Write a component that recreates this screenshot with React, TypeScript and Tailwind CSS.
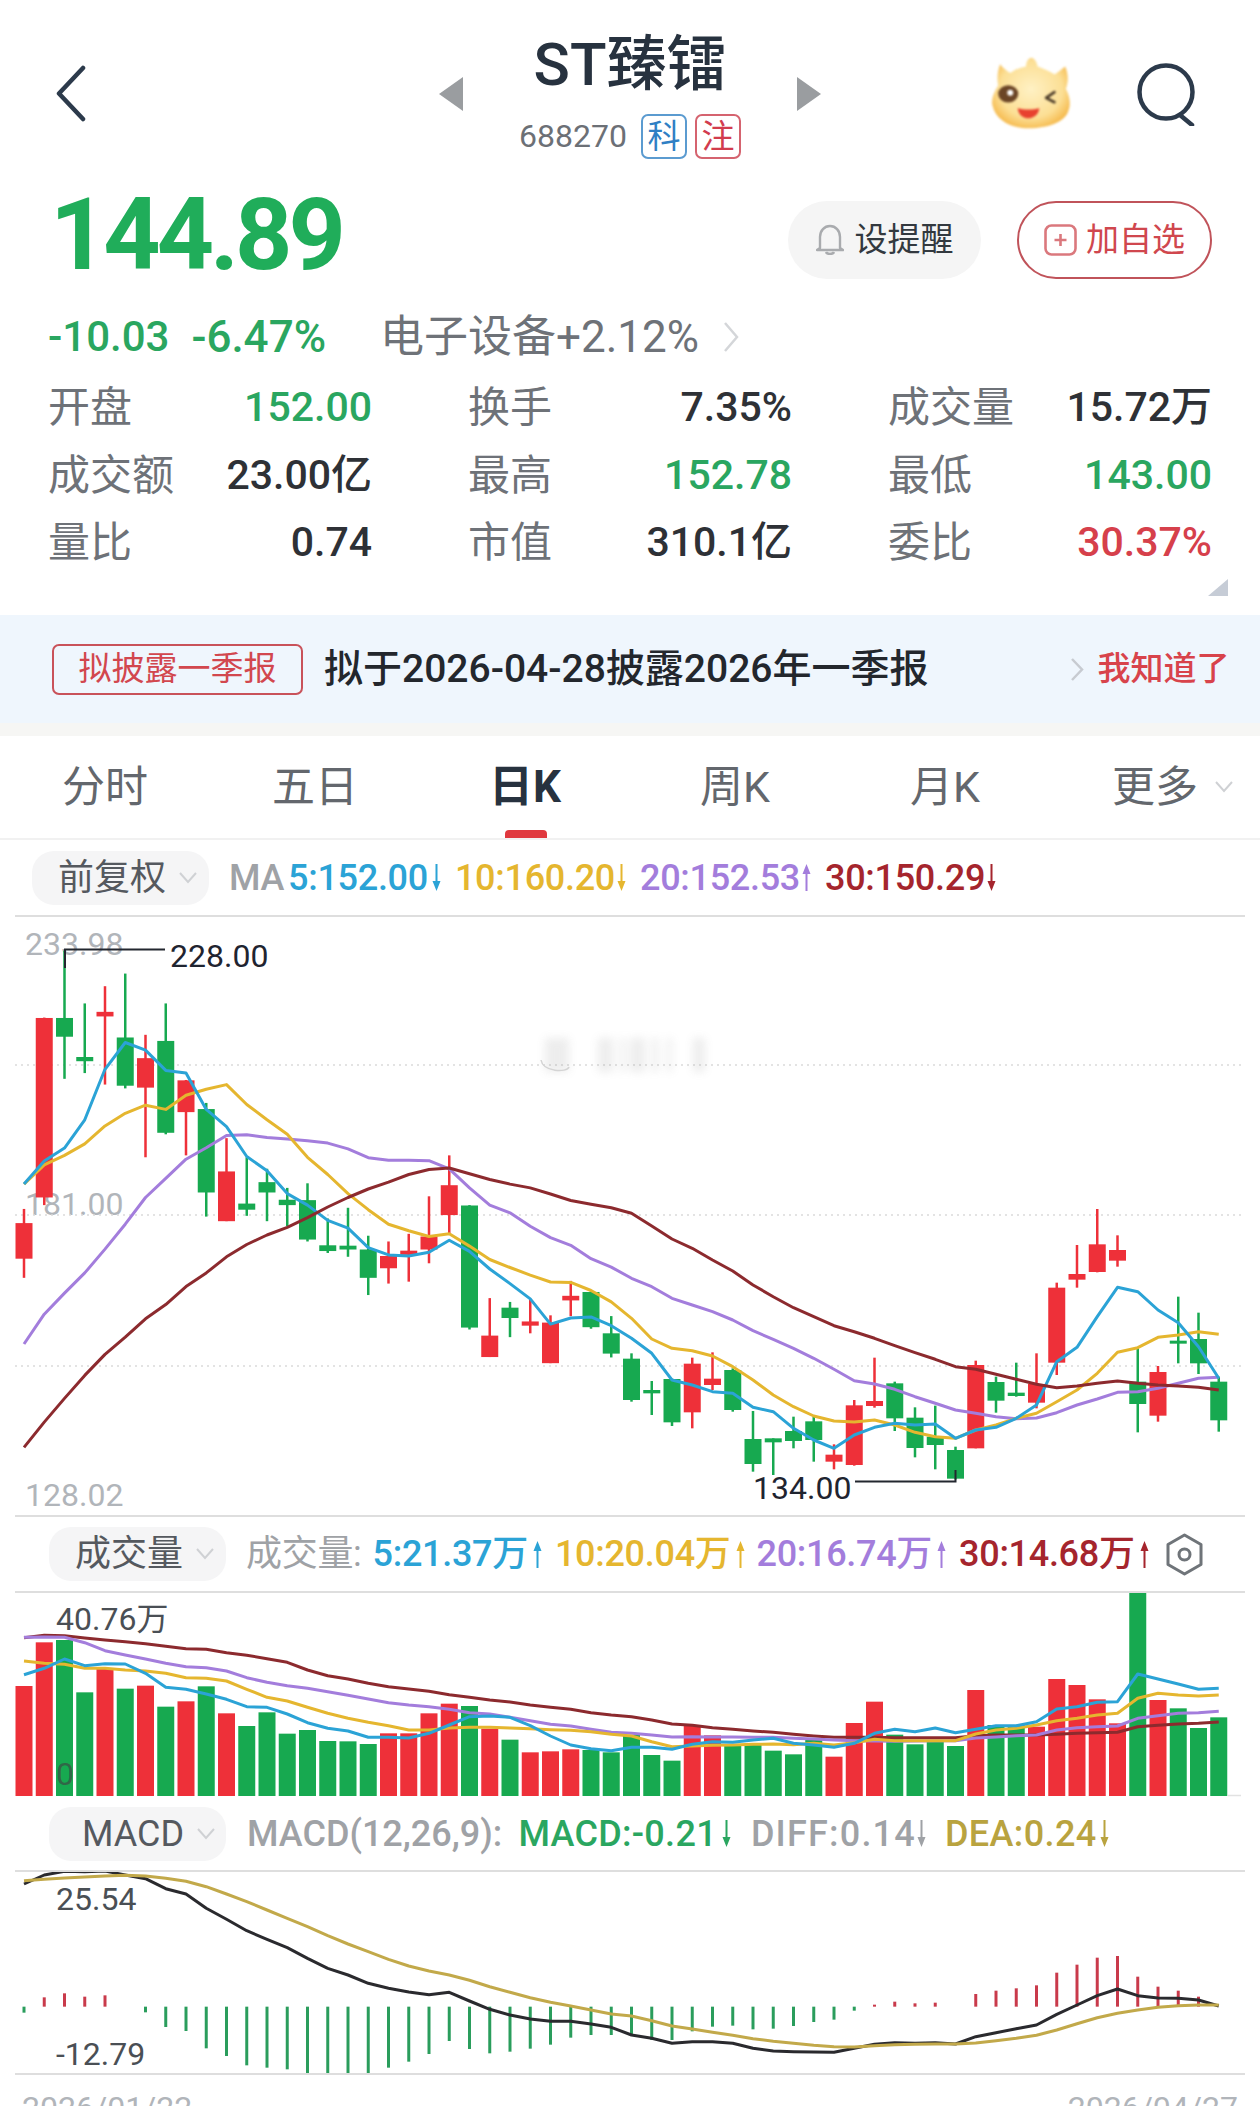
import React from 'react';

const RED = '#ee3039';
const GREEN = '#17a950';

const X = (i: number) => 24 + 20.25 * i;
// chart values below were read off crops, so each block has its own scale
const fromA = (v: number) => 920 + v / 2.613;
const fromB = (v: number) => 1100 + v / 3;
const fromVol = (v: number) => 1500 + v / 3;
const fromMacd = (v: number) => 1790 + v / 3;

type Candle = [number, number, number, number, 'r' | 'g'];

const candlesA: Candle[] = [
  [755, 792, 885, 935, 'r'], [255, 256, 725, 745, 'r'], [80, 256, 305, 415, 'g'], [218, 358, 369, 400, 'g'],
  [173, 240, 252, 430, 'r'], [140, 307, 433, 440, 'g'], [300, 361, 438, 620, 'r'], [218, 316, 556, 560, 'g'],
  [418, 419, 502, 615, 'r'], [478, 494, 712, 775, 'g'], [570, 657, 787, 787, 'r'], [620, 741, 757, 773, 'g'],
  [650, 685, 712, 787, 'g'], [700, 731, 745, 800, 'g'], [688, 732, 835, 840, 'g'], [780, 850, 865, 870, 'g'],
  [752, 851, 861, 880, 'g'], [825, 861, 935, 980, 'g'], [840, 878, 910, 950, 'r'], [820, 864, 875, 945, 'r'],
  [722, 827, 861, 897, 'r'], [615, 693, 771, 820, 'r'], [745, 746, 1065, 1070, 'g'], [988, 1086, 1142, 1142, 'r'],
  [998, 1013, 1040, 1090, 'g'], [990, 1049, 1060, 1080, 'r'], [1033, 1052, 1158, 1158, 'r'], [943, 982, 994, 1035, 'r'],
  [970, 972, 1064, 1068, 'g'], [1035, 1080, 1133, 1143, 'g'],
];
const candlesB: Candle[] = [
  [760, 776, 900, 905, 'g'], [843, 870, 880, 945, 'g'], [836, 837, 967, 978, 'g'], [773, 791, 937, 985, 'r'],
  [757, 836, 855, 870, 'r'], [805, 810, 930, 935, 'g'], [933, 1017, 1092, 1115, 'g'], [1015, 1015, 1027, 1125, 'g'],
  [950, 993, 1023, 1045, 'g'], [950, 964, 1020, 1085, 'g'], [1033, 1064, 1085, 1108, 'r'], [900, 916, 1095, 1097, 'r'],
  [773, 903, 918, 923, 'r'], [845, 850, 955, 993, 'g'], [922, 953, 1044, 1072, 'g'], [917, 1010, 1035, 1108, 'g'],
  [1040, 1050, 1136, 1138, 'g'], [782, 795, 1045, 1045, 'r'], [830, 846, 902, 938, 'g'], [788, 878, 888, 890, 'g'],
  [760, 852, 908, 925, 'r'], [548, 563, 788, 825, 'r'], [435, 522, 539, 563, 'r'], [327, 433, 516, 517, 'r'],
  [406, 450, 482, 500, 'r'], [745, 845, 912, 997, 'g'], [798, 816, 947, 965, 'r'], [590, 722, 731, 790, 'g'],
  [638, 717, 790, 822, 'g'], [830, 845, 961, 995, 'g'],
];
const candles = [
  ...candlesA.map(c => [fromA(c[0]), fromA(c[1]), fromA(c[2]), fromA(c[3]), c[4]] as Candle),
  ...candlesB.map(c => [fromB(c[0]), fromB(c[1]), fromB(c[2]), fromB(c[3]), c[4]] as Candle),
];

const join = (a: number[], b: number[], fa: (v: number) => number, fb: (v: number) => number) =>
  [...a.map(fa), ...b.map(fb)].map((y, i) => `${X(i)},${y.toFixed(1)}`).join(' ');

const priceLines = [
  {
    color: '#a37ddc',
    d: join(
      [1108, 1030, 975, 922, 860, 795, 725, 675, 625, 595, 563, 561, 568, 572, 577, 583, 598, 621, 628, 628, 629, 650, 700, 745, 765, 800, 830, 850, 885, 907],
      [535, 560, 595, 615, 635, 660, 692, 718, 745, 775, 808, 842, 852, 868, 890, 910, 930, 940, 950, 956, 954, 938, 915, 897, 877, 875, 865, 850, 835, 832],
      fromA, fromB,
    ),
  },
  {
    color: '#e5b62f',
    d: join(
      [690, 640, 615, 585, 538, 505, 484, 495, 458, 442, 430, 482, 522, 560, 620, 665, 715, 757, 795, 812, 827, 820, 852, 887, 908, 928, 946, 947, 968, 998],
      [655, 717, 745, 752, 768, 800, 840, 885, 920, 948, 963, 966, 960, 975, 997, 1010, 1015, 990, 975, 955, 940, 905, 870, 820, 757, 743, 712, 705, 695, 703],
      fromA, fromB,
    ),
  },
  {
    color: '#2ba3d6',
    d: join(
      [690, 630, 596, 522, 390, 320, 340, 393, 400, 495, 540, 618, 655, 715, 745, 785, 805, 856, 875, 878, 868, 837, 866, 912, 950, 990, 1056, 1040, 1037, 1060],
      [715, 760, 840, 855, 875, 880, 922, 935, 985, 1020, 1045, 1005, 982, 970, 975, 972, 1015, 990, 982, 955, 915, 785, 742, 650, 562, 575, 630, 668, 740, 835],
      fromA, fromB,
    ),
  },
  {
    color: '#8c2a2e',
    d: join(
      [1378, 1312, 1250, 1190, 1135, 1090, 1042, 1005, 958, 922, 880, 848, 823, 803, 778, 750, 725, 703, 685, 665, 652, 648, 663, 678, 690, 700, 716, 733, 743, 752],
      [340, 378, 417, 445, 480, 513, 555, 590, 623, 650, 677, 695, 715, 737, 758, 778, 800, 808, 823, 838, 853, 863, 858, 850, 843, 850, 855, 858, 862, 870],
      fromA, fromB,
    ),
  },
];

const volBars: [number, 'r' | 'g'][] = [
  [558, 'r'], [427, 'r'], [420, 'g'], [577, 'g'], [505, 'r'], [566, 'g'], [557, 'r'], [620, 'g'], [604, 'r'], [559, 'g'],
  [640, 'r'], [678, 'g'], [637, 'g'], [701, 'g'], [690, 'g'], [723, 'g'], [724, 'g'], [732, 'g'], [700, 'r'], [700, 'r'],
  [640, 'r'], [611, 'r'], [618, 'g'], [686, 'r'], [719, 'g'], [757, 'r'], [754, 'r'], [748, 'r'], [750, 'g'], [757, 'g'],
  [705, 'g'], [765, 'g'], [782, 'g'], [678, 'r'], [706, 'r'], [735, 'g'], [730, 'g'], [752, 'g'], [763, 'g'], [720, 'g'],
  [770, 'r'], [669, 'r'], [605, 'r'], [704, 'g'], [733, 'g'], [725, 'g'], [738, 'g'], [570, 'r'], [675, 'g'], [675, 'g'],
  [680, 'r'], [537, 'r'], [555, 'r'], [598, 'r'], [670, 'r'], [278, 'g'], [600, 'r'], [625, 'g'], [684, 'g'], [652, 'g'],
];

const volLines = [
  {
    color: '#8c2a2e',
    d: join(
      [413, 406, 407, 414, 420, 425, 431, 439, 446, 448, 458, 466, 476, 487, 510, 527, 537, 550, 560, 567, 574, 584, 592, 600, 606, 615, 622, 628, 638, 645],
      [650, 660, 672, 676, 683, 688, 693, 697, 703, 708, 712, 712, 712, 713, 713, 713, 713, 707, 705, 705, 705, 703, 700, 698, 697, 680, 676, 672, 670, 666],
      fromVol, fromVol,
    ),
  },
  {
    color: '#a37ddc',
    d: join(
      [412, 411, 412, 428, 452, 465, 477, 490, 500, 503, 513, 533, 547, 557, 565, 575, 586, 597, 608, 615, 620, 628, 638, 642, 652, 662, 673, 678, 688, 697],
      [700, 705, 711, 710, 711, 711, 712, 712, 715, 717, 720, 722, 723, 724, 723, 722, 722, 714, 711, 707, 705, 690, 683, 680, 678, 655, 647, 640, 638, 634],
      fromVol, fromVol,
    ),
  },
  {
    color: '#e5b62f',
    d: join(
      [483, 490, 493, 505, 505, 510, 513, 520, 533, 535, 543, 568, 592, 603, 622, 640, 655, 667, 677, 690, 690, 684, 682, 682, 684, 686, 689, 691, 695, 703],
      [708, 725, 740, 738, 736, 735, 733, 732, 734, 730, 735, 728, 718, 722, 722, 722, 722, 702, 690, 685, 675, 662, 655, 645, 640, 595, 580, 585, 588, 585],
      fromVol, fromVol,
    ),
  },
  {
    color: '#2ba3d6',
    d: join(
      [524, 505, 477, 497, 491, 492, 520, 562, 568, 582, 598, 620, 622, 642, 668, 685, 693, 712, 712, 714, 700, 675, 650, 648, 652, 677, 708, 735, 746, 752],
      [742, 742, 748, 733, 725, 727, 720, 715, 730, 735, 742, 730, 700, 688, 695, 684, 698, 688, 677, 677, 665, 627, 620, 607, 605, 522, 537, 552, 568, 565],
      fromVol, fromVol,
    ),
  },
];

const macdHist = [
  668, 622, 610, 620, 616, 650, 667, 711, 723, 775, 798, 826, 833, 838, 850, 850, 850, 850, 833, 815,
  792, 753, 777, 790, 785, 776, 764, 743, 735, 735, 733, 750, 750, 724, 710, 707, 718, 716, 708, 696,
  689, 662, 644, 635, 640, 638, 650, 612, 602, 595, 586, 548, 524, 503, 498, 560, 590, 602, 620, 650,
];

const diffLine = join(
  [282, 255, 244, 245, 243, 255, 266, 296, 312, 355, 388, 422, 448, 473, 505, 535, 555, 580, 595, 606, 614, 607, 633, 658, 675, 687, 694, 694, 702, 712],
  [735, 745, 760, 755, 755, 760, 775, 783, 785, 786, 787, 775, 763, 758, 760, 758, 762, 740, 728, 716, 705, 673, 645, 617, 597, 617, 624, 625, 630, 648],
  fromMacd, fromMacd,
);
const deaLine = join(
  [272, 268, 264, 261, 258, 256, 258, 265, 274, 290, 312, 335, 360, 385, 410, 437, 462, 485, 508, 528, 543, 555, 571, 590, 607, 623, 637, 648, 660, 672],
  [678, 692, 708, 717, 727, 736, 746, 754, 760, 766, 770, 771, 767, 764, 763, 762, 762, 759, 752, 745, 736, 720, 701, 683, 670, 660, 652, 647, 645, 645],
  fromMacd, fromMacd,
);

const Arrow = ({ up, className }: { up?: boolean; className: string }) => (
  <svg width="9" height="27" viewBox="0 0 9 27" className={className} fill="currentColor">
    {up ? <path d="M4.5 0L8.5 10H5.5V27H3.5V10H.5z" /> : <path d="M4.5 27L.5 17H3.5V0H5.5V17H8.5z" />}
  </svg>
);

const Chevron = ({ className }: { className?: string }) => (
  <svg width="20" height="14" viewBox="0 0 20 14" fill="none" stroke="#cfd1d4" strokeWidth="2" className={className}>
    <path d="M2 2l8 9 8-9" />
  </svg>
);

const Pill = ({ label, className }: { label: string; className: string }) => (
  <div className={`flex items-center h-[54px] w-[177px] rounded-[22px] bg-[#f5f5f6] text-[36px] font-normal tracking-normal text-[#55595f] ${className}`}>
    {label}
    <Chevron className="ml-[12px]" />
  </div>
);

const Rule = () => <div className="mx-[15px] h-[2px] bg-[#dedede]" />;

const Mascot = () => (
  <svg width="82" height="72" viewBox="0 0 240 215" className="blur-[1px]">
    <defs>
      <radialGradient id="head" cx="50%" cy="45%" r="62%">
        <stop offset="0%" stopColor="#fff1c4" />
        <stop offset="65%" stopColor="#fcdf95" />
        <stop offset="100%" stopColor="#f4b13c" />
      </radialGradient>
    </defs>
    <path
      d="M5 145C0 125 10 105 22 85C18 65 20 40 28 22C35 32 45 40 58 48C70 38 90 30 105 28C105 15 112 2 122 2C132 4 138 18 140 28C160 35 180 45 190 52C200 45 210 38 222 28C232 50 232 75 224 95C235 115 240 140 232 160C222 195 170 213 115 213C60 213 15 190 5 145Z"
      fill="url(#head)"
    />
    <ellipse cx="52" cy="110" rx="30" ry="26" fill="#6b4526" />
    <circle cx="58" cy="107" r="9" fill="#fff" />
    <path d="M190 105L165 122L190 135" fill="none" stroke="#4a3a28" strokeWidth="8" strokeLinecap="round" strokeLinejoin="round" />
    <path d="M80 153C100 158 125 158 145 153C142 175 125 183 112 183C98 183 83 175 80 153Z" fill="#e8402f" />
  </svg>
);

const Search = () => (
  <svg width="58" height="63" viewBox="0 0 58 63" fill="none" stroke="#2c3a4b" strokeWidth="4.5" strokeLinecap="round">
    <circle cx="29" cy="29" r="26.5" />
    <path d="M43 52l12 10" />
  </svg>
);

const Bell = () => (
  <svg width="28" height="32" viewBox="0 0 28 32" fill="none" stroke="#a9abae" strokeWidth="2.4">
    <path d="M4 24V13C4 6.5 8.500 2 14 2s10 4.500 10 11v11l3 2H1z" strokeLinejoin="round" />
    <path d="M10 28c1 2.500 7 2.500 8 0" />
  </svg>
);

const PlusBox = () => (
  <svg width="33" height="32" viewBox="0 0 33 32" fill="none" stroke="#d2575d" strokeWidth="2.6" className="opacity-80">
    <rect x="1.500" y="1.500" width="30" height="29" rx="6" />
    <path d="M16.500 10v12M10.500 16h12" />
  </svg>
);

const Hexagon = () => (
  <svg width="37" height="43" viewBox="0 0 37 43" fill="none" stroke="#6f7479" strokeWidth="3">
    <path d="M18.500 2L35 11.500v20L18.500 41 2 31.500v-20z" strokeLinejoin="round" />
    <circle cx="18.500" cy="21.500" r="5.500" />
  </svg>
);

const stats = [
  ['开盘', '152.00', 'text-[#2aa660]'], ['换手', '7.35%', 'text-[#2e3136]'], ['成交量', '15.72万', 'text-[#2e3136]'],
  ['成交额', '23.00亿', 'text-[#2e3136]'], ['最高', '152.78', 'text-[#2aa660]'], ['最低', '143.00', 'text-[#2aa660]'],
  ['量比', '0.74', 'text-[#2e3136]'], ['市值', '310.1亿', 'text-[#2e3136]'], ['委比', '30.37%', 'text-[#d6404b]'],
];

const tabs = ['分时', '五日', '日K', '周K', '月K', '更多'];

export default function App() {
  return (
    <div className="relative h-[2106px] w-[1260px] overflow-hidden bg-white font-['Roboto','Noto_Sans_CJK_SC',sans-serif]">
      {/* header */}
      <div className="flex h-[190px] items-start">
        <svg width="31" height="57" viewBox="0 0 31 57" fill="none" stroke="#2c3a4b" strokeWidth="4.5" strokeLinecap="round" strokeLinejoin="round" className="ml-[55px] mt-[65px]">
          <path d="M28 3L4 28.500 28 54" />
        </svg>
        <svg width="24" height="34" viewBox="0 0 24 34" className="ml-[353px] mt-[77px]">
          <path d="M24 0L0 17l24 17z" fill="#9a9da0" />
        </svg>
        <div className="flex w-[334px] flex-col items-center pt-[30px]">
          <div className="text-[60px] font-medium leading-[70px] text-[#27323f]">ST臻镭</div>
          <div className="mt-[14px] flex items-center">
            <span className="text-[32px] leading-[45px] text-[#6c7076]">688270</span>
            <span className="ml-[14px] flex h-[45px] w-[46px] items-center justify-center rounded-[7px] border-2 border-[#5b9bd0] text-[33px] text-[#2f7fc4]">科</span>
            <span className="ml-[8px] flex h-[45px] w-[46px] items-center justify-center rounded-[7px] border-2 border-[#d5636f] text-[33px] text-[#d23c4e]">注</span>
          </div>
        </div>
        <svg width="24" height="34" viewBox="0 0 24 34" className="mt-[77px]">
          <path d="M0 0l24 17L0 34z" fill="#9a9da0" />
        </svg>
        <div className="ml-[169px] mt-[57px]"><Mascot /></div>
        <div className="ml-[65px] mt-[63px]"><Search /></div>
      </div>

      {/* price */}
      <div className="flex h-[110px] items-start justify-between pl-[50px] pr-[48px]">
        <div className="-mt-[5px] text-[100px] font-bold leading-[100px] tracking-[-4px] text-[#20ad5a]">144.89</div>
        <div className="mt-[11px] flex gap-[36px]">
          <div className="flex h-[78px] w-[193px] items-center justify-center gap-[11px] rounded-full bg-[#f5f5f5] text-[33px] text-[#33393f]">
            <Bell />
            设提醒
          </div>
          <div className="flex h-[78px] w-[195px] items-center justify-center gap-[9px] rounded-full border-2 border-[#c0535a] text-[33px] text-[#d0474e]">
            <PlusBox />
            加自选
          </div>
        </div>
      </div>

      {/* change */}
      <div className="flex h-[74px] items-center pl-[48px] leading-none">
        <span className="text-[42px] font-medium text-[#2aa660]">-10.03</span>
        <span className="ml-[22px] text-[44px] font-medium text-[#2aa660]">-6.47%</span>
        <span className="ml-[54px] text-[44px] text-[#6e7278]">电子设备+2.12%</span>
        <svg width="16" height="32" viewBox="0 0 16 32" fill="none" stroke="#d4d6d9" strokeWidth="2.500" className="ml-[24px]">
          <path d="M2 2l12 14L2 30" />
        </svg>
      </div>

      {/* stats */}
      <div className="grid grid-cols-3 gap-x-[96px] px-[48px]">
        {stats.map(([label, value, color]) => (
          <div key={label} className="flex h-[67.500px] items-center justify-between">
            <span className="text-[42px] text-[#6e7278]">{label}</span>
            <span className={`text-[41px] font-medium ${color}`}>{value}</span>
          </div>
        ))}
      </div>
      <div className="flex h-[38.500px] justify-end pr-[32px] pt-[2px]">
        <svg width="20" height="17" viewBox="0 0 20 17"><path d="M20 0v17H0z" fill="#c6ccd6" /></svg>
      </div>

      {/* notice */}
      <div className="flex h-[108px] items-center bg-[#eff6fd] pl-[52px]">
        <div className="flex h-[51px] w-[251px] items-center justify-center rounded-[7px] border-2 border-[#c9525a] text-[33px] text-[#d2474e]">拟披露一季报</div>
        <div className="ml-[21px] text-[39px] font-medium text-[#23272d]">拟于2026-04-28披露2026年一季报</div>
        <svg width="14" height="25" viewBox="0 0 14 25" fill="none" stroke="#c7cbd1" strokeWidth="2.500" className="ml-[141px]">
          <path d="M2 2l10 10.500L2 23" />
        </svg>
        <div className="ml-[14px] text-[33px] font-medium text-[#d8434b]">我知道了</div>
      </div>
      <div className="h-[13px] bg-[#f6f6f4]" />

      {/* tabs */}
      <div className="grid h-[104px] grid-cols-6 border-b-2 border-[#f1f1f1]">
        {tabs.map(t => (
          <div key={t} className={`relative flex items-center justify-center ${t === '日K' ? 'text-[44px] font-bold text-[#27323f]' : 'text-[43px] text-[#63676d]'}`}>
            {t}
            {t === '日K' && <div className="absolute bottom-0 left-[85px] h-[8px] w-[42px] rounded-t-[4px] bg-[#e0383e]" />}
            {t === '更多' && <Chevron className="absolute left-[164px] top-[44px]" />}
          </div>
        ))}
      </div>

      {/* MA legend */}
      <div className="flex h-[75px] items-center pl-[32px] text-[36px] font-medium leading-none tracking-[-0.300px]">
        <Pill label="前复权" className="pl-[26px]" />
        <span className="ml-[20px] text-[#9fa2a6]">MA</span>
        <span className="ml-[4px] text-[#2ba3d6]">5:152.00</span>
        <Arrow className="ml-[4px] text-[#2ba3d6]" />
        <span className="ml-[14px] text-[#e5b62f]">10:160.20</span>
        <Arrow className="ml-[2px] text-[#e5b62f]" />
        <span className="ml-[14px] text-[#a37ddc]">20:152.53</span>
        <Arrow up className="ml-[2px] text-[#a37ddc]" />
        <span className="ml-[14px] text-[#a5252d]">30:150.29</span>
        <Arrow className="ml-[2px] text-[#a5252d]" />
      </div>
      <Rule />

      {/* K line */}
      <div className="relative h-[598px]">
        <span className="absolute left-[25px] top-[11px] text-[32px] leading-none text-[#b1b5ba]">233.98</span>
        <span className="absolute left-[25px] top-[271px] text-[32px] leading-none text-[#b1b5ba]">181.00</span>
        <span className="absolute left-[25px] top-[562px] text-[32px] leading-none text-[#b1b5ba]">128.02</span>
        <svg viewBox="0 917 1260 598" className="relative block h-[598px] w-[1260px]">
          {[1065, 1215, 1366].map(y => (
            <line key={y} x1="15" x2="1244" y1={y} y2={y} stroke="#dadada" strokeWidth="1.500" strokeDasharray="2 4" />
          ))}
          <g fill="#8a8a8a" className="blur-[4px] opacity-15">
            <rect x="545" y="1038" width="24" height="34" />
            <rect x="598" y="1038" width="15" height="34" />
            <rect x="620" y="1038" width="5" height="34" />
            <rect x="630" y="1038" width="15" height="34" />
            <rect x="652" y="1038" width="6" height="34" />
            <rect x="667" y="1038" width="5" height="34" />
            <rect x="693" y="1038" width="12" height="34" />
          </g>
          <path d="M541 1060c2 12 26 13 28 7" fill="none" stroke="#d4d4d4" strokeWidth="1.500" />
          {candles.map((c, i) => (
            <g key={i} fill={c[4] === 'r' ? RED : GREEN}>
              <rect x={X(i) - 1.25} y={c[0]} width="2.500" height={c[3] - c[0]} />
              <rect x={X(i) - 8.5} y={c[1]} width="17" height={Math.max(c[2] - c[1], 3)} />
            </g>
          ))}
          {priceLines.map(l => (
            <polyline key={l.color} points={l.d} fill="none" stroke={l.color} strokeWidth="3" strokeLinejoin="round" />
          ))}
          <path d="M65 968V949.500H165" fill="none" stroke="#23272f" strokeWidth="2" />
          <path d="M855 1481.500H955.500V1470" fill="none" stroke="#23272f" strokeWidth="2" />
        </svg>
        <span className="absolute left-[170px] top-[23px] text-[32px] leading-none text-[#1f2430]">228.00</span>
        <span className="absolute left-[753px] top-[555px] text-[32px] leading-none text-[#1f2430]">134.00</span>
      </div>
      <Rule />

      {/* volume legend */}
      <div className="flex h-[74px] items-center pl-[49px] text-[36px] font-medium leading-none tracking-[-0.300px]">
        <Pill label="成交量" className="pl-[26px]" />
        <span className="ml-[20px] font-normal text-[#9fa2a6]">成交量:</span>
        <span className="ml-[11px] text-[#2ba3d6]">5:21.37万</span>
        <Arrow up className="ml-[5px] text-[#2ba3d6]" />
        <span className="ml-[13px] text-[#e5b62f]">10:20.04万</span>
        <Arrow up className="ml-[5px] text-[#e5b62f]" />
        <span className="ml-[12px] text-[#a37ddc]">20:16.74万</span>
        <Arrow up className="ml-[5px] text-[#a37ddc]" />
        <span className="ml-[13px] text-[#a5252d]">30:14.68万</span>
        <Arrow up className="ml-[5px] text-[#a5252d]" />
        <div className="ml-[17px]"><Hexagon /></div>
      </div>
      <Rule />

      {/* volume */}
      <div className="relative h-[204px]">
        <svg viewBox="0 1593 1260 204" className="block h-[204px] w-[1260px]">
          <line x1="1228" x2="1241" y1="1795.500" y2="1795.500" stroke="#e2e2e2" strokeWidth="1.500" />
          {volBars.map(([top, c], i) => (
            <rect key={i} x={X(i) - 8.5} y={fromVol(top)} width="17" height={1796 - fromVol(top)} fill={c === 'r' ? RED : GREEN} />
          ))}
          {volLines.map(l => (
            <polyline key={l.color} points={l.d} fill="none" stroke={l.color} strokeWidth="3" strokeLinejoin="round" />
          ))}
        </svg>
        <span className="absolute left-[56px] top-[10px] text-[32px] leading-none text-[#4a4f55]">40.76万</span>
        <span className="absolute left-[56px] top-[165px] text-[32px] leading-none text-[#3c4a44]/70">0</span>
      </div>

      {/* MACD legend */}
      <div className="flex h-[73px] items-center pl-[49px] text-[36px] font-medium leading-none">
        <Pill label="MACD" className="pl-[33px]" />
        <span className="ml-[21px] text-[#9fa2a6]">MACD(12,26,9):</span>
        <span className="ml-[16px] tracking-[0.300px] text-[#2aa660]">MACD:-0.21</span>
        <Arrow className="ml-[5px] text-[#2aa660]" />
        <span className="ml-[20px] tracking-[1.200px] text-[#9fa2a6]">DIFF:0.14</span>
        <Arrow className="ml-[1px] text-[#9fa2a6]" />
        <span className="ml-[19px] tracking-[0.400px] text-[#b9a33f]">DEA:0.24</span>
        <Arrow className="ml-[3px] text-[#b9a33f]" />
      </div>
      <Rule />

      {/* MACD */}
      <div className="relative h-[201px]">
        <svg viewBox="0 1872 1260 201" className="block h-[201px] w-[1260px]">
          {macdHist.map((v, i) =>
            v === 650 ? null : (
              <line key={i} x1={X(i)} x2={X(i)} y1={fromMacd(650)} y2={fromMacd(v)} stroke={v < 650 ? '#c93a4b' : '#2a9d5c'} strokeWidth="3" />
            ),
          )}
          <polyline points={diffLine} fill="none" stroke="#2a2a2e" strokeWidth="3" strokeLinejoin="round" />
          <polyline points={deaLine} fill="none" stroke="#c2a94a" strokeWidth="3" strokeLinejoin="round" />
        </svg>
        <span className="absolute left-[56px] top-[11px] text-[32px] leading-none text-[#4a4f55]">25.54</span>
        <span className="absolute left-[56px] top-[166px] text-[32px] leading-none text-[#4a4f55]">-12.79</span>
      </div>
      <Rule />

      <div className="flex justify-between px-[22px] pt-[17px] text-[32px] leading-none text-[#b1b5ba]">
        <span>2026/01/22</span>
        <span>2026/04/27</span>
      </div>
    </div>
  );
}
